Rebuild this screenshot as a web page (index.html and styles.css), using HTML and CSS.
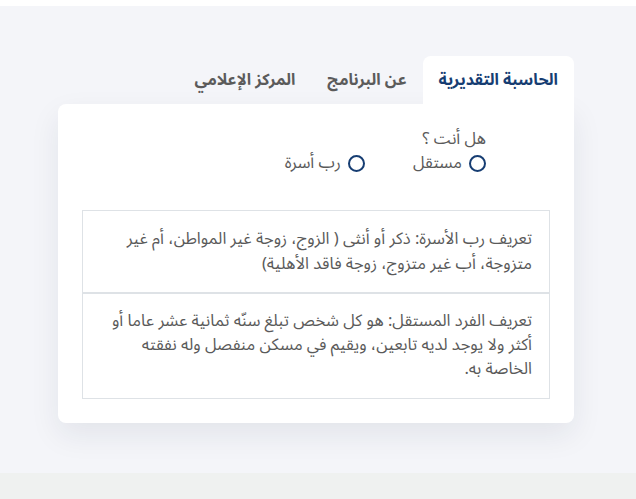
FILE: index.html
```html
<!DOCTYPE html>
<html lang="ar" dir="rtl">
<head>
<meta charset="utf-8">
<link rel="stylesheet" href="styles.css">
</head>
<body>
<div class="topbar"></div>
<section class="section">
  <div class="container">
    <ul class="tabs">
      <li class="tab active">الحاسبة التقديرية</li>
      <li class="tab">عن البرنامج</li>
      <li class="tab">المركز الإعلامي</li>
    </ul>
    <div class="card">
      <div class="question">
        <div class="q-label">هل أنت ؟</div>
        <div class="options">
          <label class="option"><span class="radio"></span><span>مستقل</span></label>
          <label class="option"><span class="radio"></span><span>رب أسرة</span></label>
        </div>
      </div>
      <div class="info">
        <div class="info-cell">تعريف رب الأسرة: ذكر أو أنثى ( الزوج، زوجة غير المواطن، أم غير متزوجة، أب غير متزوج، زوجة فاقد الأهلية)</div>
        <div class="info-cell">تعريف الفرد المستقل: هو كل شخص تبلغ سنّه ثمانية عشر عاما أو أكثر ولا يوجد لديه تابعين، ويقيم في مسكن منفصل وله نفقته الخاصة به.</div>
      </div>
    </div>
  </div>
</section>
<div class="footer"></div>
</body>
</html>
```
FILE: styles.css
```css
html, body {
  margin: 0;
  padding: 0;
}
body {
  background: #eff1f0;
  font-family: "Noto Sans Arabic", "DejaVu Sans", sans-serif;
  color: #5a5a5a;
}
.topbar {
  height: 6px;
  background: #ffffff;
}
.section {
  background: #f4f5f9;
  padding: 50px 62px 50px 58px;
}
.tabs {
  list-style: none;
  margin: 0;
  padding: 0;
  display: flex;
  height: 48px;
}
.tab {
  padding: 0 16px;
  display: flex;
  align-items: center;
  font-size: 16px;
  font-weight: bold;
  color: #5b5b5b;
  border-radius: 8px 8px 0 0;
}
.tab.active {
  background: #ffffff;
  color: #163d72;
}
.card {
  background: #ffffff;
  border-radius: 8px 0 8px 8px;
  padding: 24px;
  box-shadow: 0 12px 30px rgba(30, 40, 70, 0.08);
}
.question {
  margin-right: 64px;
  margin-bottom: 35px;
}
.q-label {
  font-size: 16.5px;
  line-height: 22px;
  color: #5a5a5a;
}
.options {
  display: flex;
  gap: 48px;
  margin-top: 1px;
}
.option {
  display: flex;
  align-items: center;
  gap: 7px;
  font-size: 16.5px;
  line-height: 24px;
  color: #5a5a5a;
}
.radio {
  width: 13px;
  height: 13px;
  border: 2px solid #163d72;
  border-radius: 50%;
}
.info {
  border: 1px solid #dee2e6;
}
.info-cell {
  padding: 15px 17px 16px;
  font-size: 16.5px;
  line-height: 25px;
  color: #5a5a5a;
}
.info-cell + .info-cell {
  border-top: 2px solid #dee2e6;
  line-height: 24px;
  padding-bottom: 17px;
}
.footer {
  height: 28px;
}
```
